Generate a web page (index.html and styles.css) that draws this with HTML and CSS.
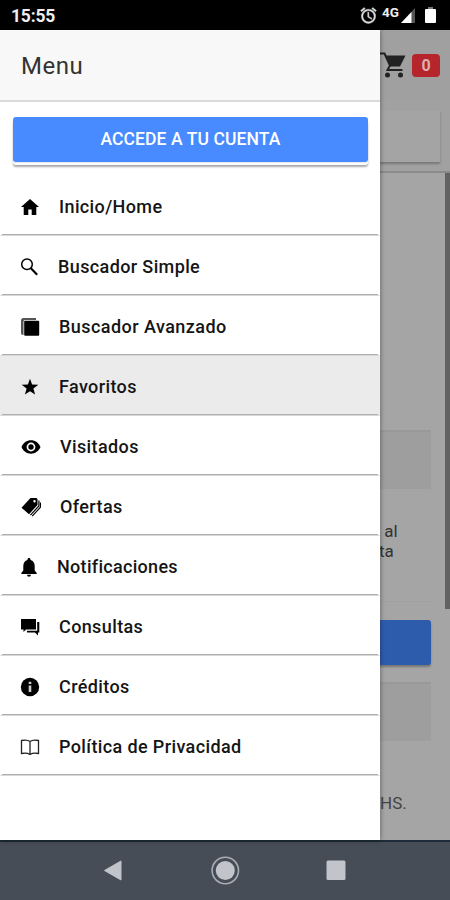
FILE: index.html
```html
<!DOCTYPE html>
<html lang="es">

<head>
    <meta charset="UTF-8">
    <meta name="viewport" content="width=device-width, initial-scale=1.0">
    <title>Menu</title>
    <link rel="stylesheet" href="styles.css">
</head>

<body>
    <div class="status-bar">
        <span class="clock">15:55</span>
        <svg class="alarm" viewBox="0 0 24 24" width="19" height="19"><path fill="#ddd" stroke="#ddd" stroke-width=".5" d="M22 5.72l-4.600-3.860-1.290 1.530 4.600 3.860L22 5.720zM7.880 3.390L6.600 1.860 2 5.710l1.290 1.530 4.590-3.850zM12.500 8H11v6l4.750 2.850.750-1.230-4-2.370V8zM12 4c-4.970 0-9 4.030-9 9s4.020 9 9 9a9 9 0 0 0 0-18zm0 16c-3.870 0-7-3.130-7-7s3.130-7 7-7 7 3.130 7 7-3.130 7-7 7z"/></svg>
        <span class="network">4G</span>
        <svg class="signal" viewBox="0 0 14 15" width="14" height="15"><path fill="#555" d="M14 0v15H0z"/><path fill="#fff" d="M10.500 4v11H0z"/></svg>
        <svg class="battery" viewBox="0 0 11 16" width="11" height="16"><path fill="#777" d="M3 0h5v2H3z"/><rect y="2" width="11" height="14" rx="1" fill="#fff"/></svg>
    </div>

    <div class="screen">
        <div class="menu">
            <div class="menu-header">Menu</div>
            <button class="login-button">ACCEDE A TU CUENTA</button>
            <ul class="menu-list">
                <li class="item">
                    <svg class="icon" viewBox="0 0 20 20"><path d="M10 2l9 8h-2.700v8h-4.600v-5.500H8.300V18H3.700v-8H1z"/></svg>
                    <span class="label">Inicio/Home</span>
                </li>
                <li class="item">
                    <svg class="icon" viewBox="0 0 20 20"><g fill="none" stroke="#000"><circle cx="7" cy="7.200" r="5.300" stroke-width="1.500"/><path d="M10.900 11.200l6.300 6.500" stroke-width="2.100"/></g></svg>
                    <span class="label search">Buscador Simple</span>
                </li>
                <li class="item">
                    <svg class="icon" viewBox="0 0 20 20"><path fill="#555" d="M1 3.500Q1 1 3.500 1H16v2H5Q3.500 3 3.500 4.500V18H3Q1 18 1 16z"/><rect x="4.200" y="3.700" width="15" height="15" rx="1"/></svg>
                    <span class="label advanced">Buscador Avanzado</span>
                </li>
                <li class="item active">
                    <svg class="icon" viewBox="0 0 20 20"><path d="M10 1.800l2.100 5.800 6.200.2-4.900 3.800 1.700 6-5.100-3.400-5.100 3.400 1.700-6-4.900-3.800 6.200-.2z"/></svg>
                    <span class="label">Favoritos</span>
                </li>
                <li class="item">
                    <svg class="icon eye" viewBox="0 0 20 20"><path fill-rule="evenodd" d="M10 3.300C5.800 3.300 2.200 6 .500 10c1.700 4 5.300 6.700 9.500 6.700s7.800-2.700 9.500-6.700C17.800 6 14.200 3.300 10 3.300zm0 11.100a4.400 4.400 0 1 1 0-8.800 4.400 4.400 0 0 1 0 8.800z"/><circle cx="10" cy="10" r="2.700"/></svg>
                    <span class="label">Visitados</span>
                </li>
                <li class="item">
                    <svg class="icon tags" viewBox="0 0 20 20"><path fill-rule="evenodd" d="M9.500 1H15q1.500 0 1.500 1.500V8L8 17.200.500 10.700zM13.500 3a1.200 1.200 0 1 0 0 2.400 1.200 1.200 0 0 0 0-2.400z"/><path fill="none" stroke="#000" stroke-width="1.200" d="M17.900 3.500V9l-8.500 9.200M19.500 5.500v4.700l-8.300 9"/></svg>
                    <span class="label">Ofertas</span>
                </li>
                <li class="item">
                    <svg class="icon bell" viewBox="0 0 20 20"><path d="M10 1c-.9 0-1.500.6-1.500 1.500v.6C5.600 3.800 4.300 6.200 4.300 9v4.500L2.300 16v1h15.400v-1l-2-2.500V9c0-2.800-1.300-5.200-4.200-5.900v-.6C11.500 1.600 10.900 1 10 1zM8 17.700a2 2 0 0 0 4 0z"/></svg>
                    <span class="label notif">Notificaciones</span>
                </li>
                <li class="item">
                    <svg class="icon" viewBox="0 0 20 20"><path d="M1 2h15v10.500H6L3.500 15v-2.500H1z"/><path d="M17.200 5h2.100v10.500H18V18.500l-3-3H7v-1.800h10.200z"/></svg>
                    <span class="label">Consultas</span>
                </li>
                <li class="item">
                    <svg class="icon" viewBox="0 0 20 20"><circle cx="10" cy="10" r="9.200"/><path fill="#ccc" d="M8.700 4.700h2.600v2.400H8.700zM8.700 8.500h2.600V15H8.700z"/></svg>
                    <span class="label">Créditos</span>
                </li>
                <li class="item">
                    <svg class="icon" viewBox="0 0 20 20"><path fill="none" stroke="#222" stroke-width="1.300" d="M10 4.500C8 3 4 3 1.500 3.500v13c3-.5 6.500-.3 8.500 1 2-1.300 5.500-1.500 8.500-1v-13C16 3 12 3 10 4.500zv13"/></svg>
                    <span class="label">Política de Privacidad</span>
                </li>
            </ul>
        </div>

        <div class="page">
            <div class="toolbar">
                <svg viewBox="0 0 26 26" width="26" height="26"><path fill="none" stroke="#222" stroke-width="2" d="M0 1.500h4.500l5.500 12-2.500 4.500h15"/><path fill="#222" d="M5 3.500h20.500L20 14.500H10z"/><circle cx="7.500" cy="23" r="2.500" fill="#222"/><circle cx="20.500" cy="23" r="2.500" fill="#222"/></svg>
                <span class="badge">0</span>
            </div>
            <div class="search-area"><div class="search-box"></div></div>
            <div class="content">
                <div class="column">
                    <div class="panel first"></div>
                    <p class="text">&nbsp;al<br><span class="second-line">ta</span></p>
                    <div class="blue-button"></div>
                    <div class="panel"></div>
                    <p class="hours">HS.</p>
                </div>
                <div class="scrollbar"></div>
            </div>
        </div>
    </div>

    <div class="nav-bar">
        <svg viewBox="0 0 450 60" width="450" height="60">
            <path fill="#c1c5cb" stroke="#c1c5cb" stroke-linejoin="round" d="M104.500 30.500L121 21v19z"/>
            <circle cx="225.300" cy="30.500" r="13.200" fill="none" stroke="#a9adb3" stroke-width="1.600"/>
            <circle cx="225.300" cy="30.500" r="9.500" fill="#c1c5cb"/>
            <rect x="326.500" y="20.500" width="19" height="19.500" rx="1.500" fill="#c1c5cb"/>
        </svg>
    </div>
</body>

</html>
```
FILE: styles.css
```css
html, body {
    height: 100%;
    margin: 0;
    font-family: Roboto, Arial, sans-serif;
    overflow: hidden;
}

body {
    display: flex;
    flex-direction: column;
    width: 450px;
    height: 900px;
}

.status-bar {
    display: flex;
    align-items: center;
    height: 30px;
    padding: 0 14px 0 11px;
    box-sizing: border-box;
    background: #000;
    color: #eee;
}

.clock {
    flex: 1;
    font-size: 17.500px;
    font-weight: 700;
    letter-spacing: -0.200px;
    padding-top: 2px;
}

.network {
    font-size: 13.500px;
    font-weight: 700;
    margin: -7px 2px 0 4px;
}

.battery {
    margin-left: 10px;
}

.screen {
    display: flex;
    height: 810px;
}

.menu {
    width: 380px;
    flex: none;
    background: #fff;
    z-index: 1;
    box-shadow: 0 0 5px rgba(0, 0, 0, 0.45);
}

.menu-header {
    height: 72px;
    line-height: 72px;
    box-sizing: border-box;
    padding-left: 21px;
    border-bottom: 2px solid #d9dadc;
    background: #f8f8f8;
    color: #333;
    font-size: 24px;
    letter-spacing: 0.500px;
}

.login-button {
    display: block;
    width: 355px;
    height: 45px;
    margin: 15px 0 14px 13px;
    padding: 0 0 2px;
    border: none;
    border-radius: 3px;
    background: #488aff;
    box-shadow: 0 1px 1px #e8e8e8, 0 3px 0 #fff, 0 5px 2px #aaa;
    color: #fff;
    font: 500 17.500px Roboto, Arial, sans-serif;
    letter-spacing: 0.100px;
}

.menu-list {
    list-style: none;
    margin: 0;
    padding: 0;
}

.item {
    display: flex;
    align-items: center;
    height: 60px;
    padding: 0 0 0 20px;
    box-sizing: border-box;
    background: linear-gradient(#aaa, #aaa) 2px 58px / 376px 2px no-repeat;
    box-shadow: inset 0 -3px 1px -2px #ddd;
}

.item.active {
    background-color: #ebebeb;
}

.icon {
    width: 20px;
    height: 20px;
    flex: none;
    margin-top: 1px;
}

.eye, .tags {
    margin-left: 1px;
}

.bell {
    margin-left: -1px;
}

.label {
    margin-left: 19px;
    color: #151515;
    font-size: 18px;
    font-weight: 500;
    letter-spacing: 0.380px;
    white-space: nowrap;
}

.search {
    margin-left: 18px;
}

.advanced {
    letter-spacing: 0.450px;
}

.notif {
    letter-spacing: 0.300px;
    margin-left: 18px;
}

.page {
    width: 70px;
    display: flex;
    flex-direction: column;
    background: #a5a5a5;
    overflow: hidden;
}

.toolbar {
    display: flex;
    align-items: center;
    height: 70px;
    gap: 6px;
    background: #a0a0a0;
}

.badge {
    width: 28px;
    height: 23px;
    border-radius: 4px;
    background: #b5252b;
    color: #ddb0b0;
    font-size: 16px;
    font-weight: 700;
    line-height: 23px;
    text-align: center;
}

.search-area {
    height: 73px;
    box-sizing: border-box;
    border-bottom: 2px solid #8b8b8b;
    background: #a1a1a1;
}

.search-box {
    width: 60px;
    height: 52px;
    margin-top: 10px;
    background: #a4a4a4;
    box-shadow: 0 2px 2px #777;
}

.content {
    display: flex;
    justify-content: space-between;
    height: 667px;
}

.column {
    width: 51px;
}

.panel {
    height: 57px;
    border-top: 2px solid #999;
    background: #9e9e9e;
}

.panel.first {
    margin-top: 257px;
}

.text {
    height: 80px;
    margin: 32px 0 18px;
    border-bottom: 1px solid #a0a0a0;
    color: #333;
    font-size: 17px;
    line-height: 20px;
}

.second-line {
    margin-left: -1px;
}

.blue-button {
    height: 45px;
    margin-bottom: 17px;
    border-radius: 0 3px 3px 0;
    background: #2e5cad;
    box-shadow: 0 2px 2px #777;
}

.hours {
    margin: 52px 0 0;
    color: #444;
    font-size: 17px;
    line-height: 20px;
}

.scrollbar {
    width: 5px;
    height: 436px;
    background: #626262;
}

.nav-bar {
    height: 60px;
    background: #464d56;
    box-shadow: inset 0 2px 0 #1d2c38;
}
```
